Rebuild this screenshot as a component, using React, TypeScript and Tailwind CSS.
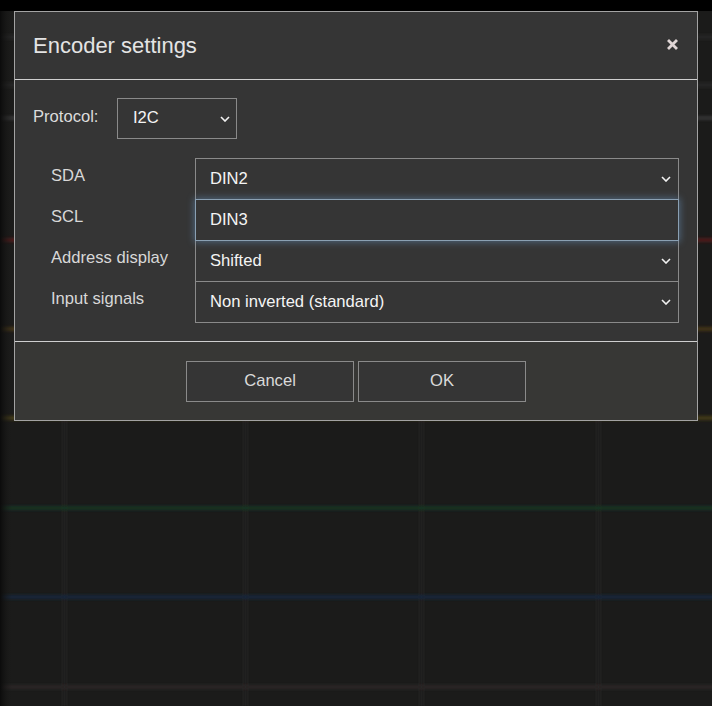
import type { ReactNode } from "react";

const FONT = { fontFamily: '"Liberation Sans", Arial, sans-serif' };

function Chevron() {
  return (
    <svg width="10" height="6" viewBox="0 0 10 6" className="shrink-0">
      <polyline points="1,1 5,5 9,1" fill="none" stroke="#f2f2f2" strokeWidth="1.6" />
    </svg>
  );
}

function SelectBox({ value, focused, className = "" }: { value: string; focused?: boolean; className?: string }) {
  return (
    <div
      className={
        "flex items-center justify-between bg-[#353535] text-[16.6px] text-[#f4f4f4] " +
        (focused
          ? "relative z-10 border border-[#8aa0b3] shadow-[0_0_7px_1px_rgba(110,160,210,0.45)] "
          : "border border-[#8a8a8a] ") +
        className
      }
    >
      <span>{value}</span>
      {!focused && <Chevron />}
    </div>
  );
}

function Row({ label, children }: { label: string; children: ReactNode }) {
  return (
    <div className="flex items-start -mt-px first:mt-0">
      <div className="w-[144px] pt-[6px] text-[16.6px] text-[#d8d8d8]">{label}</div>
      {children}
    </div>
  );
}

// Scope backdrop: dim grid plus blurred channel traces behind the modal
function Backdrop() {
  const traces = [
    { y: 37, c: "#282828" },
    { y: 85, c: "#262626" },
    { y: 118, c: "#343434" },
    { y: 240, c: "#4e1a1a" },
    { y: 329, c: "#443415" },
    { y: 418, c: "#453b15" },
    { y: 508, c: "#163424" },
    { y: 597, c: "#19273b" },
    { y: 687, c: "#2b2726" },
  ];
  return (
    <svg className="absolute inset-0" width="712" height="706">
      <defs>
        <filter id="soft" x="-5%" y="-50%" width="110%" height="200%">
          <feGaussianBlur stdDeviation="1.8" />
        </filter>
        <linearGradient id="edge" x1="0" x2="1">
          <stop offset="0" stopColor="#0b0b0b" />
          <stop offset="1" stopColor="#1b1b1a" stopOpacity="0" />
        </linearGradient>
      </defs>
      <rect x="0" y="0" width="712" height="706" fill="#1b1b1a" />
      <g filter="url(#soft)">
        {[64, 245, 421, 598].map((x) => (
          <rect key={x} x={x - 1} y="11" width="3" height="695" fill="#222222" />
        ))}
        {traces.map((t) => (
          <rect key={t.y} x="-10" y={t.y - 2} width="732" height="4" fill={t.c} />
        ))}
      </g>
      <rect x="0" y="11" width="12" height="695" fill="url(#edge)" />
      <rect x="0" y="0" width="712" height="11" fill="#000" />
    </svg>
  );
}

export default function App() {
  return (
    <div className="relative w-[712px] h-[706px] overflow-hidden bg-[#1b1b1a]" style={FONT}>
      <Backdrop />

      <div className="absolute left-[14px] top-[11px] w-[684px] border border-[#a3a3a3] bg-[#353535]">
        <div className="flex h-[68px] items-center justify-between border-b border-[#cfcfcf] pl-[18px] pr-[19px]">
          <h1 className="text-[22px] text-[#e4e4e4] leading-none">Encoder settings</h1>
          <svg width="11" height="11" viewBox="0 0 11 11" className="-mt-[2px]">
            <path d="M2 2 L9 9 M9 2 L2 9" stroke="#e0d6d6" strokeWidth="2.8" strokeLinecap="square" />
          </svg>
        </div>

        <div className="pt-[18px] pb-[18px]">
          <div className="flex items-start pl-[18px]">
            <div className="w-[84px] pt-[7px] text-[16.6px] text-[#dcdcdc]">Protocol:</div>
            <SelectBox value="I2C" className="h-[41px] w-[120px] pl-[15px] pr-[6px]" />
          </div>

          <div className="mt-[19px] pl-[36px] pr-[18px]">
            <Row label="SDA">
              <SelectBox value="DIN2" className="h-[42px] flex-1 pl-[14px] pr-[7px]" />
            </Row>
            <Row label="SCL">
              <SelectBox value="DIN3" focused className="h-[42px] flex-1 pl-[14px] pr-[7px]" />
            </Row>
            <Row label="Address display">
              <SelectBox value="Shifted" className="h-[42px] flex-1 pl-[14px] pr-[7px]" />
            </Row>
            <Row label="Input signals">
              <SelectBox value="Non inverted (standard)" className="h-[42px] flex-1 pl-[14px] pr-[7px]" />
            </Row>
          </div>
        </div>

        <div className="flex h-[79px] justify-center gap-[4px] border-t border-[#cfcfcf] bg-[#373735] pt-[19px]">
          <button className="h-[41px] w-[168px] border border-[#8a8a8a] bg-[#353535] text-[16.6px] text-[#dadada]">
            Cancel
          </button>
          <button className="h-[41px] w-[168px] border border-[#8a8a8a] bg-[#353535] text-[16.6px] text-[#dadada]">
            OK
          </button>
        </div>
      </div>
    </div>
  );
}
